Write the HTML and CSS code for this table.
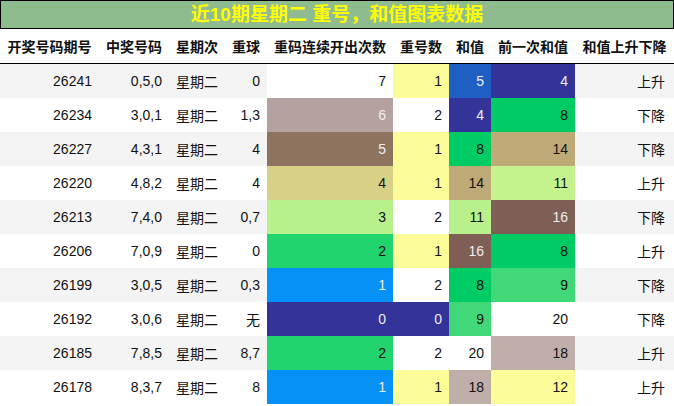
FILE: index.html
```html
<!DOCTYPE html>
<html lang="zh">
<head>
<meta charset="utf-8">
<link rel="stylesheet" href="styles.css">
</head>
<body>
<div class="title">近10期星期二 重号，和值图表数据</div>
<table class="grid">
<colgroup>
<col class="c1"><col class="c2"><col class="c3"><col class="c4"><col class="c5"><col class="c6"><col class="c7"><col class="c8"><col class="c9">
</colgroup>
<thead>
<tr><th>开奖号码期号</th><th>中奖号码</th><th>星期次</th><th>重球</th><th>重码连续开出次数</th><th>重号数</th><th>和值</th><th>前一次和值</th><th>和值上升下降</th></tr>
</thead>
<tbody>
<tr><td>26241</td><td>0,5,0</td><td class="l">星期二</td><td>0</td><td class="bg-white">7</td><td class="bg-yellow">1</td><td class="bg-blue dk">5</td><td class="bg-indigo dk">4</td><td class="last">上升</td></tr>
<tr><td>26234</td><td>3,0,1</td><td class="l">星期二</td><td>1,3</td><td class="bg-rose dk">6</td><td class="bg-white">2</td><td class="bg-indigo dk">4</td><td class="bg-green">8</td><td class="last">下降</td></tr>
<tr><td>26227</td><td>4,3,1</td><td class="l">星期二</td><td>4</td><td class="bg-brown dk">5</td><td class="bg-yellow">1</td><td class="bg-green">8</td><td class="bg-tan">14</td><td class="last">下降</td></tr>
<tr><td>26220</td><td>4,8,2</td><td class="l">星期二</td><td>4</td><td class="bg-khaki">4</td><td class="bg-yellow">1</td><td class="bg-tan">14</td><td class="bg-lime">11</td><td class="last">上升</td></tr>
<tr><td>26213</td><td>7,4,0</td><td class="l">星期二</td><td>0,7</td><td class="bg-lime2">3</td><td class="bg-white">2</td><td class="bg-lime2">11</td><td class="bg-mocha dk">16</td><td class="last">下降</td></tr>
<tr><td>26206</td><td>7,0,9</td><td class="l">星期二</td><td>0</td><td class="bg-green2">2</td><td class="bg-yellow">1</td><td class="bg-mocha dk">16</td><td class="bg-green">8</td><td class="last">上升</td></tr>
<tr><td>26199</td><td>3,0,5</td><td class="l">星期二</td><td>0,3</td><td class="bg-sky dk">1</td><td class="bg-white">2</td><td class="bg-green">8</td><td class="bg-green3">9</td><td class="last">下降</td></tr>
<tr><td>26192</td><td>3,0,6</td><td class="l">星期二</td><td>无</td><td class="bg-indigo dk">0</td><td class="bg-indigo dk">0</td><td class="bg-green3">9</td><td class="bg-white">20</td><td class="last">下降</td></tr>
<tr><td>26185</td><td>7,8,5</td><td class="l">星期二</td><td>8,7</td><td class="bg-green2">2</td><td class="bg-white">2</td><td class="bg-white">20</td><td class="bg-taupe">18</td><td class="last">上升</td></tr>
<tr><td>26178</td><td>8,3,7</td><td class="l">星期二</td><td>8</td><td class="bg-sky dk">1</td><td class="bg-yellow">1</td><td class="bg-taupe">18</td><td class="bg-yellow">12</td><td class="last">上升</td></tr>
</tbody>
</table>
</body>
</html>
```
FILE: styles.css
```css
html, body {
  margin: 0;
  padding: 0;
  background: #ffffff;
}
body {
  width: 674px;
  font-family: "Liberation Sans", "Noto Sans CJK SC", sans-serif;
  color: #111111;
}
.title {
  box-sizing: border-box;
  height: 29px;
  background: #8fbc8f;
  border: 1px solid #000000;
  color: #ffff00;
  font-weight: bold;
  font-size: 19px;
  line-height: 27px;
  text-align: center;
}
.grid {
  width: 674px;
  table-layout: fixed;
  border-collapse: collapse;
  border-spacing: 0;
  font-size: 14px;
}
.c1 { width: 99px; }
.c2 { width: 70px; }
.c3 { width: 56px; }
.c4 { width: 42px; }
.c5 { width: 126px; }
.c6 { width: 56px; }
.c7 { width: 42px; }
.c8 { width: 84px; }
.c9 { width: 99px; }
.grid th {
  height: 34px;
  padding: 0;
  font-weight: bold;
  font-size: 14px;
  text-align: center;
  white-space: nowrap;
  border-bottom: 1px solid #000000;
  color: #111111;
}
.grid td {
  height: 34px;
  padding: 0 7px;
  text-align: right;
  white-space: nowrap;
}
.grid td.l { text-align: left; }
.grid td.last { padding-right: 9px; }
.grid tbody tr:nth-child(odd) { background: #f4f4f4; }
.grid tbody tr:nth-child(even) { background: #ffffff; }
.grid td.dk { color: #eeeeee; }
.bg-white { background: #ffffff; }
.bg-yellow { background: #fcfc99; }
.bg-blue { background: #1f5fc4; }
.bg-indigo { background: #333399; }
.bg-rose { background: #b5a19f; }
.bg-green { background: #00cc66; }
.bg-brown { background: #8e735f; }
.bg-tan { background: #bfa977; }
.bg-khaki { background: #d9d088; }
.bg-lime { background: #c4f28c; }
.bg-lime2 { background: #b8f08c; }
.bg-mocha { background: #7f5f55; }
.bg-green2 { background: #22d46e; }
.bg-sky { background: #0591f5; }
.bg-green3 { background: #40d878; }
.bg-taupe { background: #c0aea8; }
```
